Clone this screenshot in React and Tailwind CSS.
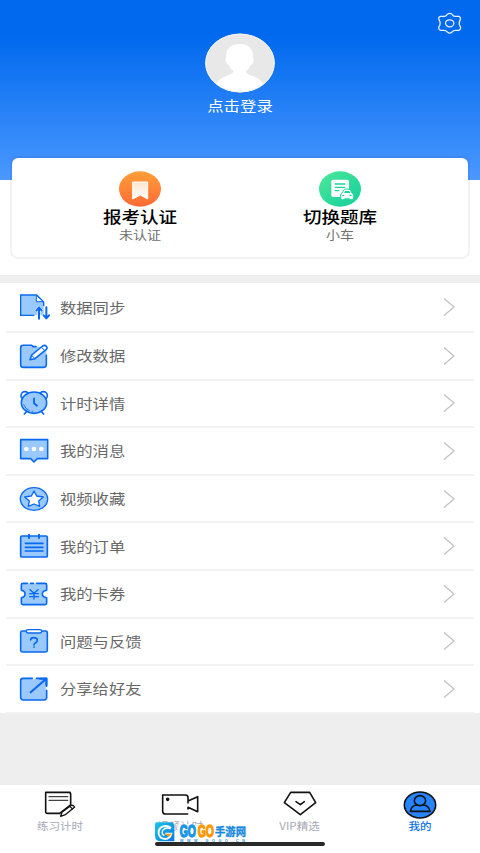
import React from 'react';

const line = { stroke: '#0768f2', strokeWidth: 4.8, strokeLinejoin: 'round', strokeLinecap: 'round' };
const soft = '#99c9ff';

function RowIcon({ children }) {
  return (
    <svg className="w-8 h-7 flex-shrink-0" viewBox="0 0 96 84" fill="none" {...line}>
      {children}
    </svg>
  );
}

const SyncIcon = () => (
  <RowIcon>
    <path d="M5 7H52L74 26V66H5Z" fill={soft} stroke="none" />
    <path d="M45 67H5V6H53L74 27V38" strokeLinejoin="miter" strokeWidth="4" />
    <path d="M52 8V26H72Z" fill="#fff" strokeWidth="3" />
    <path d="M60 77V44M52 53L60 43L68 53M82 43V75M74 67L82 76L90 67" stroke="#fff" strokeWidth="9" />
    <path d="M60 77V44M52 53L60 43L68 53M82 43V75M74 67L82 76L90 67" strokeWidth="6" />
  </RowIcon>
);

const EditIcon = () => (
  <RowIcon>
    <rect x="5" y="14" width="77" height="62" rx="8" fill={soft} stroke="none" />
    <path d="M51 14H42L38 10H12Q5 10 5 17V68Q5 76 13 76H73Q82 76 82 68V40" />
    <path d="M33 53L38 39L71 12Q77 8 82 13Q87 18 81 23L48 50Z" fill="#fff" />
    <path d="M68 16L77 26M38 40L47 49" strokeWidth="3" />
  </RowIcon>
);

const ClockIcon = () => (
  <RowIcon>
    <circle cx="18" cy="20" r="12" fill="#fff" />
    <circle cx="73" cy="20" r="12" fill="#fff" />
    <path d="M24 66L16 75M66 66L74 75" strokeWidth="5" />
    <ellipse cx="45" cy="41" rx="38" ry="32" fill={soft} />
    <path d="M45 28V43L54 50" strokeWidth="5.5" />
    <path d="M14 47Q19 60 31 65M39 67L41 67" strokeWidth="2.5" />
  </RowIcon>
);

const MessageIcon = () => (
  <RowIcon>
    <path d="M5 8H86V65H55L45 75L35 65H5Z" fill={soft} />
    <g fill="#fff" stroke="none">
      <circle cx="22" cy="36" r="7" />
      <circle cx="45" cy="36" r="7" />
      <circle cx="67" cy="36" r="7" />
    </g>
  </RowIcon>
);

const StarIcon = () => (
  <RowIcon>
    <ellipse cx="45" cy="42" rx="41" ry="34" fill={soft} strokeWidth="4" />
    <path d="M45 18L53 33L73 36L59 48L62 64L45 57L28 64L31 48L17 36L37 33Z" fill="#fff" strokeWidth="4" />
  </RowIcon>
);

const OrderIcon = () => (
  <RowIcon>
    <rect x="5" y="12" width="80" height="63" rx="4" fill={soft} strokeWidth="5" />
    <path d="M30 8V18M60 8V18" strokeWidth="6" />
    <path d="M19 34H72M19 46H72M19 57H72" />
  </RowIcon>
);

const CouponIcon = () => (
  <RowIcon>
    <path d="M8 10H82V31Q70 33 70 42Q70 51 83 53V74H7V53Q18 50 18 42Q18 33 7 31V10Z" fill={soft} stroke="none" />
    <path d="M25 10H12Q7 10 7 15V31Q18 33 18 42Q18 51 7 53V69Q7 74 12 74H78Q83 74 83 69V53Q70 51 70 42Q70 33 83 31V15Q83 10 78 10H53M35 10H43" />
    <path d="M33 29L45 40L57 29M32 41H58M32 50H58M45 40V57" strokeWidth="4" />
  </RowIcon>
);

const HelpIcon = () => (
  <RowIcon>
    <rect x="5" y="12" width="80" height="63" rx="5" fill={soft} />
    <rect x="22" y="8" width="46" height="10" rx="5" fill="#fff" strokeWidth="4" />
    <path d="M35 39Q35 32 44 32Q55 32 55 40Q55 45 49 48Q45 50 45 54M45 60V61" strokeWidth="5" />
  </RowIcon>
);

const ShareIcon = () => (
  <RowIcon>
    <rect x="5" y="9" width="78" height="66" rx="7" fill={soft} stroke="none" />
    <path d="M40 10H12Q5 10 5 17V67Q5 75 13 75H75Q83 75 83 67V46M52 10H83V34" />
    <path d="M42 10H49M83 37V43" stroke="#fff" strokeWidth="6" strokeLinecap="butt" />
    <path d="M35 52L80 13M63 11H82V30" strokeWidth="6" />
  </RowIcon>
);

const rows = [
  { label: '数据同步', Icon: SyncIcon },
  { label: '修改数据', Icon: EditIcon },
  { label: '计时详情', Icon: ClockIcon },
  { label: '我的消息', Icon: MessageIcon },
  { label: '视频收藏', Icon: StarIcon },
  { label: '我的订单', Icon: OrderIcon },
  { label: '我的卡券', Icon: CouponIcon },
  { label: '问题与反馈', Icon: HelpIcon },
  { label: '分享给好友', Icon: ShareIcon },
];

function Header() {
  return (
    <header className="h-[157px] flex flex-col items-center pt-[33px] relative">
      <svg className="absolute left-[437px] top-[12px] w-[25px] h-[23px]" viewBox="0 0 75 69" fill="none" stroke="#e8f2ff" strokeWidth="3.8">
        <path d="M31 7Q38 1 45 7Q50 15 57 13L66 13Q72 16 70 23Q63 34 70 44Q73 51 66 55L57 55Q50 54 45 60Q38 67 31 60Q26 54 19 55L10 55Q3 51 6 44Q13 34 6 23Q3 16 10 13L19 13Q26 15 31 7Z" />
        <ellipse cx="38" cy="34" rx="12.5" ry="10.5" />
      </svg>
      <svg className="w-[70px] h-[60px]" viewBox="0 0 210 180">
        <defs>
          <clipPath id="avatar">
            <ellipse cx="105" cy="90" rx="104" ry="88" />
          </clipPath>
        </defs>
        <ellipse cx="105" cy="90" rx="104" ry="88" fill="#e8e8e8" />
        <path clipPath="url(#avatar)" fill="#fff" d="M105 33C128 33 144 46 144 67V76Q149 79 145 86Q144 93 137 97Q132 110 123 114Q123 123 137 127Q172 137 174 155V180H34V155Q36 138 70 127Q85 121 86 114Q76 109 72 97Q65 94 63 86Q58 80 63 76V67C63 46 80 33 105 33Z" />
        <ellipse cx="105" cy="90" rx="103" ry="87" fill="none" stroke="#f5f3ee" strokeWidth="3" />
      </svg>
      <div className="mt-[2px] text-[14px] leading-5 text-white scale-x-[1.17]">点击登录</div>
    </header>
  );
}

function CertIcon() {
  return (
    <svg className="w-[42px] h-9" viewBox="0 0 126 108">
      <defs>
        <linearGradient id="orange" x1="0" y1="0" x2="0" y2="1">
          <stop stopColor="#ff9f38" />
          <stop offset="1" stopColor="#ff6a35" />
        </linearGradient>
        <linearGradient id="flag" x1="0" y1="0" x2="0" y2="1">
          <stop stopColor="#ffe4cc" />
          <stop offset="1" stopColor="#fff" />
        </linearGradient>
      </defs>
      <ellipse cx="63" cy="54" rx="63" ry="53" fill="url(#orange)" />
      <path d="M41 33H86V84L64 72L41 84Z" fill="url(#flag)" stroke="#fff" strokeWidth="3" />
    </svg>
  );
}

function BankIcon() {
  return (
    <svg className="w-[42px] h-9" viewBox="0 0 126 108">
      <defs>
        <linearGradient id="green" x1="0" y1="0" x2="1" y2="1">
          <stop stopColor="#4fe89a" />
          <stop offset="1" stopColor="#10cf9b" />
        </linearGradient>
      </defs>
      <ellipse cx="63" cy="54" rx="63" ry="53" fill="url(#green)" />
      <rect x="37" y="26" width="53" height="52" rx="5" fill="#fff" />
      <path d="M47 39H79M47 49H79M47 59H61" stroke="#20d79b" strokeWidth="4" />
      <path d="M65 72Q65 66 70 65L74 57Q76 54 84 54Q92 54 95 58L98 65Q104 67 104 73V82Q104 86 99 86H70Q65 86 65 82Z" fill="#fff" stroke="#20d79b" strokeWidth="3" />
      <path d="M75 66L78 60H91L94 66Z" fill="#20d79b" />
      <path d="M70 73H76M91 73H98M76 84H92" stroke="#20d79b" strokeWidth="4" />
    </svg>
  );
}

function CardItem({ icon, title, note }) {
  return (
    <div className="w-[200px] flex flex-col items-center pt-[13px]">
      {icon}
      <div className="-mt-px text-[16px] leading-5 text-black font-medium scale-x-[1.16]">{title}</div>
      <div className="text-[12px] leading-[18px] text-[#707070] scale-x-[1.17]">{note}</div>
    </div>
  );
}

const TabIcon = ({ children }) => (
  <svg className="w-10 h-[30px]" viewBox="0 0 120 90" fill="none" stroke="#111" strokeWidth="4.8" strokeLinejoin="round" strokeLinecap="round">
    {children}
  </svg>
);

function Tab({ label, active, children }) {
  return (
    <div className="w-[120px] flex flex-col items-center pt-1">
      <TabIcon>{children}</TabIcon>
      <div className={active ? 'text-[10px] leading-[14px] font-medium text-[#0c72e8] scale-x-[1.15]' : 'text-[10px] leading-[14px] text-[#a6a9b8] scale-x-[1.15]'}>
        {label}
      </div>
    </div>
  );
}

function Watermark() {
  return (
    <svg className="absolute left-[154px] top-[36px] w-[94px] h-6" viewBox="0 0 282 72">
      <defs>
        <linearGradient id="badge" x1="0" y1="0" x2="1" y2="1">
          <stop stopColor="#1bc4e8" />
          <stop offset="1" stopColor="#0878e0" />
        </linearGradient>
      </defs>
      <g transform="translate(0 3)">
        <path d="M8 1H50Q61 1 61 14V58H20Q3 58 3 40V8Q3 1 8 1Z" fill="url(#badge)" />
        <path d="M51 18Q40 8 25 14Q12 21 14 35Q17 50 33 51Q48 50 52 35H34" fill="none" stroke="#fff" strokeWidth="6" />
        <path d="M50 21Q36 14 27 24Q20 35 31 41" fill="none" stroke="#fff" strokeWidth="4" />
        <path d="M32 35H55L43 44Z" fill="#ff9800" />
      </g>
      {/* white backing keeps the letters clear of the tab label */}
      <rect x="70" y="10" width="208" height="42" rx="6" fill="#fff" fillOpacity="0.75" />
      <g fontFamily="Liberation Sans, sans-serif" fontWeight="700" strokeLinejoin="round">
        <text x="77" y="49" fontSize="50" fill="#1495e5" stroke="#1495e5" strokeWidth="4" textLength="49" lengthAdjust="spacingAndGlyphs">GO</text>
        <text x="131" y="49" fontSize="50" fill="#ff9800" stroke="#ff9800" strokeWidth="4" textLength="49" lengthAdjust="spacingAndGlyphs">GO</text>
        <text x="183" y="45" fontSize="34" fill="#1587dd" stroke="#1587dd" strokeWidth="1" fontFamily="Noto Sans CJK SC, sans-serif" textLength="93" lengthAdjust="spacingAndGlyphs">手游网</text>
        <text x="78" y="62" fontSize="11" fill="#168fe0" textLength="195" lengthAdjust="spacing">WWW.GOGO.CN</text>
      </g>
    </svg>
  );
}

function TabBar() {
  return (
    <nav className="h-[68px] bg-white flex relative">
      <Tab label="练习计时">
        <path d="M90 10H17V68Q17 73 23 73H59L92 48V16Q92 10 86 10" />
        <path d="M27 23H83M27 34H83" stroke="#444" strokeWidth="4" />
        <path d="M62 82L66 70L94 49Q100 48 104 54L76 77Z" fill="#fff" strokeWidth="4" />
        <path d="M90 53L98 60" strokeWidth="3.5" />
      </Tab>
      <Tab label="视频计时">
        <path d="M83 75H16Q8 75 8 67V18H76Q84 18 84 25V36L113 23V68L84 55V60M84 36V42" />
        <circle cx="23" cy="31" r="3" fill="#111" />
      </Tab>
      <Tab label="VIP精选">
        <path d="M32 10H89L107 41L61 77L13 41Z" />
        <path d="M48 38L61 47L73 38" />
      </Tab>
      <Tab label="我的" active>
        <ellipse cx="60" cy="48" rx="47" ry="39" fill="#2684fc" />
        <ellipse cx="60" cy="35" rx="17" ry="15" />
        <path d="M31 67Q34 49 51 48M69 48Q87 49 90 67H31" />
      </Tab>

      <div className="absolute left-[155px] top-[57px] w-[170px] h-[4px] rounded-full bg-[#292929]" />
      <Watermark />
    </nav>
  );
}

export default function App() {
  return (
    <div className="w-[480px] h-[853px] overflow-hidden bg-[#eeeeee] flex flex-col font-['Noto_Sans_CJK_SC',sans-serif]">
      <section className="h-[275px] flex-shrink-0 bg-[linear-gradient(to_bottom,#0069ee_0px,#0069ee_35px,#4b98ff_180px,#ffffff_180px)]">
        <Header />
        <div className="mx-[10px] h-[103px] rounded-lg border-2 border-black/5 bg-white bg-clip-padding flex px-[28px] -mt-px">
          <CardItem icon={<CertIcon />} title="报考认证" note="未认证" />
          <CardItem icon={<BankIcon />} title="切换题库" note="小车" />
        </div>
      </section>

      <ul className="mt-2 h-[430px] flex-shrink-0 bg-white px-[6px] flex flex-col">
        {rows.map(({ label, Icon }) => (
          <li key={label} className="h-[47.6px] first:h-[50px] flex-shrink-0 border-b-2 border-[#f3f3f3] flex items-center pl-[13px] pr-[18px]">
            <Icon />
            <span className="ml-[9px] -mt-px text-[14px] leading-5 text-[#686868] origin-left scale-x-[1.165]">{label}</span>
            <svg className="ml-auto w-[14px] h-5" viewBox="0 0 14 20" fill="none" stroke="#c2c2c2" strokeWidth="1.3">
              <path d="M2 1.5L12 10L2 18.5" />
            </svg>
          </li>
        ))}
      </ul>

      <div className="mt-auto">
        <TabBar />
      </div>
    </div>
  );
}
